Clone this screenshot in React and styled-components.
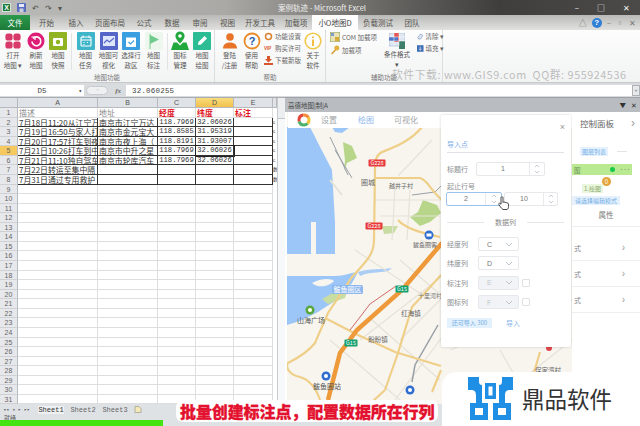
import React from 'react';
import styled, { createGlobalStyle } from 'styled-components';

const CJK = '"Noto Sans CJK SC", "Liberation Sans", sans-serif';
const MONO = '"Liberation Mono", "Noto Sans CJK SC", monospace';

const GlobalStyle = createGlobalStyle`
  html, body { margin: 0; padding: 0; background: #fff; }
  * { box-sizing: border-box; }
`;

const TABS = [
  ['开始', 31], ['插入', 28], ['页面布局', 40], ['公式', 28], ['数据', 28], ['审阅', 28],
  ['视图', 27], ['开发工具', 38], ['加载项', 34],
];

const ROWS = [
  ['描述', '地址', '经度', '纬度', '标注'],
  ['7月18日11:20从江宁万', '南京市江宁万达', '118.7969', '32.06026', ''],
  ['7月19日16:50与家人打', '南京市金元宝大', '118.8585', '31.95319', ''],
  ['7月20日17:57打车到夜', '南京市夜上海（', '118.8191', '31.93007', ''],
  ['7月21日10:26打车到中', '南京市中升之星', '118.7969', '32.06026', ''],
  ['7月21日11:10独自驾车', '南京市轮库汽车', '118.7969', '32.06026', ''],
  ['7月22日转运至集中隔', '', '', '', ''],
  ['7月31日通过专用救护', '', '', '', ''],
];

function GridIcon() {
  return (
    <svg width="20" height="20" viewBox="0 0 20 20">
      {[[6, 6], [14, 6], [6, 14], [14, 14]].map(([x, y]) => (
        <rect key={x + '-' + y} x={x - 3.6} y={y - 3.6} width="7.2" height="7.2" rx="2.6" fill="#d83a6a" />
      ))}
    </svg>
  );
}

function Tile({ bg, round, children }) {
  return (
    <svg width="18" height="18" viewBox="0 0 18 18">
      {round ? <circle cx="9" cy="9" r="8.5" fill={bg} /> : <rect width="18" height="18" rx="1" fill={bg} />}
      {children}
    </svg>
  );
}

const RIBBON_A = [
  { lines: ['打开', '地图 ▾'], w: 24, icon: <GridIcon /> },
  { lines: ['刷新', '地图'], w: 22, icon: <Tile bg="#dd1f78" round><path d="M6 6.5A4.4 4.4 0 1 1 5 9.5" fill="none" stroke="#fff" strokeWidth="1.6" /><path d="M4.5 5h3.5v3" fill="none" stroke="#fff" strokeWidth="1.2" /></Tile> },
  { lines: ['地图', '快照'], w: 22, icon: <Tile bg="#8fb321"><rect x="4" y="6" width="10" height="8" rx="1" fill="#fff" /><circle cx="9" cy="10" r="2.2" fill="#8fb321" /></Tile> },
];
const RIBBON_B = [
  { lines: ['地图', '任务'], w: 23, icon: <Tile bg="#3fb5c9"><rect x="4" y="5" width="10" height="9" rx="1" fill="none" stroke="#fff" strokeWidth="1.1" /><path d="M4 8h10M6 3.5v2.5M12 3.5v2.5M6.5 10.5h1M10 10.5h1M6.5 12.5h1" stroke="#fff" strokeWidth="1" /></Tile> },
  { lines: ['地图可', '视化'], w: 23, icon: <Tile bg="#5566c8"><rect x="3" y="4" width="12" height="10" fill="#dfe5fb" /><path d="M4 11l3-3 2.5 2 4.5-4" fill="none" stroke="#5566c8" strokeWidth="1.2" /></Tile> },
  { lines: ['选择行', '政区'], w: 22, icon: <Tile bg="#3a9fe0"><path d="M4 5.5h10V15H4z" fill="#fff" /><path d="M6.5 4a2.5 2.5 0 0 1 5 0M6.5 10l2 2 3.5-3.5" fill="none" stroke="#3a9fe0" strokeWidth="1.2" /></Tile> },
  { lines: ['地图', '标注'], w: 23, icon: <Tile bg="#eef7ee"><path d="M5 2v15" stroke="#8ed3a0" strokeWidth="1.2" /><path d="M5 3l9 4.5-9 4.5z" fill="#6fcb8b" /></Tile> },
];
const RIBBON_C = [
  { lines: ['图标', '管理'], w: 22, icon: <svg width="20" height="20" viewBox="0 0 20 20"><path d="M10 .5a4.6 4.6 0 0 1 4.6 4.6c0 3-4.6 7.6-4.6 7.6S5.4 8.1 5.4 5.1A4.6 4.6 0 0 1 10 .5z" fill="#20a83c" /><circle cx="10" cy="5" r="1.8" fill="#fff" /><path d="M1 19l2.5-7.500h3.500l3 3 3-3h3.500L19 19z" fill="#20a83c" /></svg> },
  { lines: ['地图', '绘图'], w: 22, icon: <Tile bg="#2dbd94"><path d="M5 13l.5-3 6-6 2.5 2.5-6 6z" fill="#fff" /></Tile> },
];
const RIBBON_D = [
  { lines: ['登陆', '/注册'], w: 23, icon: <svg width="18" height="18" viewBox="0 0 18 18"><circle cx="9" cy="5" r="3.8" fill="#e8742a" /><path d="M2 16.5c0-4 3-6 7-6s7 2 7 6z" fill="#e8742a" /></svg> },
  { lines: ['使用', '帮助'], w: 21, icon: <svg width="18" height="18" viewBox="0 0 18 18"><circle cx="9" cy="9" r="7.5" fill="#fff" stroke="#e8892a" strokeWidth="1.8" /><text x="9" y="13" textAnchor="middle" fontFamily="Liberation Sans" fontWeight="700" fontSize="11" fill="#2457a6">?</text></svg> },
];

function Big({ item }) {
  return (
    <BigButton $w={item.w}>
      <IconSlot>{item.icon}</IconSlot>
      <BigLabel>{item.lines[0]}<br />{item.lines[1]}</BigLabel>
    </BigButton>
  );
}

function Cog() {
  return <svg width="9" height="9" viewBox="0 0 9 9"><circle cx="4.5" cy="4.5" r="3" fill="none" stroke="#d9822b" strokeWidth="1.5" /></svg>;
}
function Vip() {
  return <VipTag>VIP</VipTag>;
}
function Download() {
  return <svg width="9" height="9" viewBox="0 0 9 9"><path d="M3 0h3v3h2L4.5 6.500 1 3h2zM0 7h9v2H0z" fill="#d9552b" /></svg>;
}
function Key() {
  return <svg width="10" height="10" viewBox="0 0 10 10"><circle cx="6.8" cy="3" r="2.5" fill="#e3b23c" /><path d="M5 4.5L1 8.500l1 1 4-4" fill="#d69a2a" /></svg>;
}
function Com() {
  return <svg width="10" height="10" viewBox="0 0 10 10"><rect width="10" height="10" fill="#e8e4b8" stroke="#8f9a5c" /><rect x="1" y="1" width="3" height="3" fill="#7a9ad0" /><rect x="5" y="5" width="4" height="4" fill="#d6ad3c" /></svg>;
}

function CondIcon() {
  return (
    <svg width="16" height="17" viewBox="0 0 16 17">
      <rect width="16" height="13" fill="#dfe7f3" stroke="#8ba3c4" strokeWidth=".5" />
      <rect x="5" y="0" width="5" height="9" fill="#e25656" />
      <rect x="0" y="4" width="9" height="4" fill="#5178c7" />
      <rect x="10" y="8" width="6" height="8" fill="#3d7f6a" />
      <path d="M0 4h16M0 8h16M5 0v13M10 0v13" stroke="#fff" strokeWidth=".5" />
    </svg>
  );
}

function MapArt() {
  return (
    <MapSvg viewBox="287 112 285 310" width="285" height="310">
      <rect x="287" y="112" width="285" height="310" fill="#f7f5ee" />
      <path d="M287 127H310L318 143L332 170L335 222V254H287Z" fill="#9cc6f8" />
      <path d="M332 127H350L342 133L335 132Z" fill="#9cc6f8" />
      <rect x="311" y="222" width="5" height="32" fill="#f7f5ee" />
      <path d="M287 276H335C345 276 352 272 358 272L352 283L338 299L318 312L300 321L287 325Z" fill="#9cc6f8" />
      <path d="M358 272C370 268 382 270 392 268L388 271C378 273 368 272 360 276Z" fill="#a9cdf5" />
      <path d="M312 283C320 278 332 278 334 281C330 286 318 289 312 283Z" fill="#f7f5ee" />
      <path d="M343 142L352 146L357 158L347 163L344 171L345 160Z" fill="#b8d68a" />
      <path d="M423 200L437 205L441 213L430 222L420 226L410 217L418 212Z" fill="#b8d68a" />
      <path d="M322 299L338 290L350 283L345 298L328 304Z" fill="#c7dda2" />
      <path d="M382 226H398L394 233L384 234Z" fill="#c7dda2" />
      <g fill="none" stroke="#e6e2d8" strokeWidth="1.2">
        <path d="M375 200H442M380 216H440M395 188L392 240M410 190L407 240M432 140L398 176M476 250L360 340M470 300L380 420M460 280L400 340M372 320L440 380M330 340L400 400M355 250L430 300M400 260L470 320M420 240L480 260M450 350L572 300M470 420L572 340M500 350L540 420" />
        <path d="M342 195L330 180" strokeWidth="2" />
      </g>
      <g fill="none" stroke="#9aa0a8" strokeWidth="1">
        <path d="M330 137L348 175M335 150L352 178" />
        <path d="M412 195L435 192L445 182" />
        <path d="M438 325L415 365L412 382" strokeWidth="1.5" />
      </g>
      <g fill="none" stroke="#efcf88" strokeWidth="2.2">
        <path d="M422 127C410 142 392 148 382 152C376 155 375 160 375 170L374 240C374 252 370 258 352 277L328 313L315 343C308 352 298 358 288 363C285 368 290 375 300 377C310 380 316 388 320 400" />
        <path d="M376 178H420C428 180 430 190 442 200" />
        <path d="M398 220C405 228 418 232 440 237" />
        <path d="M325 318L358 335L395 352L441 366" />
        <path d="M441 275L412 307L398 353L385 390L372 402" />
        <path d="M441 370L432 392" />
        <path d="M540 352L520 420" />
      </g>
      <path d="M442 243L402 290L357 330L340 353L328 400" fill="none" stroke="#ee9a3a" strokeWidth="4.5" />
      <path d="M396 286L370 304L350 330" fill="none" stroke="#d26a6a" strokeWidth="1" />
      <rect x="288" y="112" width="284" height="16" fill="#fff" />
      <RoadTag x={377} y={163} w={17} fill="#e83a3a" label="G228" />
      <RoadTag x={374} y={226} w={17} fill="#e83a3a" label="G228" />
      <RoadTag x={402} y={289} w={13} fill="#15a070" label="G15" />
      <RoadTag x={351} y={343} w={13} fill="#15a070" label="G15" />
      <rect x="332" y="285" width="31" height="9" rx="1.5" fill="#8db7ee" />
      <MapText x={347.500} y={292} fill="#fff" size={7}>鲅鱼圈区</MapText>
      <MapText x={368} y={185} fill="#666" size={7}>圈城</MapText>
      <MapText x={401} y={188} fill="#666" size={6}>越井子村</MapText>
      <MapText x={425} y={247} fill="#666" size={6}>鲅鱼圈客</MapText>
      <MapText x={411} y={316} fill="#666" size={6.5}>红海镇</MapText>
      <MapText x={378} y={342} fill="#666" size={6.5}>盼盼镇</MapText>
      <MapText x={430} y={298} fill="#777" size={6}>十里河村</MapText>
      <MapText x={311} y={323} fill="#555" size={7}>山海广场</MapText>
      <MapText x={327} y={389} fill="#555" size={7}>鲅鱼圈站</MapText>
      <MapText x={548} y={373} fill="#666" size={6.5}>保家湾村</MapText>
      <circle cx="310" cy="310" r="4.5" fill="#5aa83c" />
      <circle cx="310" cy="310" r="2" fill="#fff" />
      <circle cx="429" cy="235" r="4.5" fill="#2f6ed0" />
      <rect x="426.5" y="233.5" width="5" height="3" fill="#fff" />
      <circle cx="326" cy="376" r="4.5" fill="#2f6ed0" />
      <circle cx="326" cy="376" r="2" fill="#fff" />
      <circle cx="410" cy="390" r="4.5" fill="#2f6ed0" />
      <circle cx="410" cy="390" r="2" fill="#fff" />
      <circle cx="549" cy="348" r="3" fill="#e0464b" />
    </MapSvg>
  );
}

function RoadTag({ x, y, w, fill, label }) {
  return (
    <g>
      <rect x={x - w / 2} y={y - 3.5} width={w} height="7" rx="1" fill={fill} />
      <MapText x={x} y={y + 2.2} fill="#fff" size={5.5}>{label}</MapText>
    </g>
  );
}

function MapText({ x, y, fill, size, children }) {
  return <text x={x} y={y} fill={fill} fontSize={size} textAnchor="middle" fontFamily="Noto Sans CJK SC, sans-serif">{children}</text>;
}

function BrandRing() {
  return (
    <svg width="14" height="14" viewBox="0 0 14 14">
      <circle cx="7" cy="7" r="5" fill="none" stroke="#f2c230" strokeWidth="3" strokeDasharray="8 24" strokeDashoffset="4" />
      <circle cx="7" cy="7" r="5" fill="none" stroke="#49b36b" strokeWidth="3" strokeDasharray="10 22" strokeDashoffset="-4" />
      <circle cx="7" cy="7" r="5" fill="none" stroke="#e4453a" strokeWidth="3" strokeDasharray="8 24" strokeDashoffset="-14" />
      <circle cx="7" cy="7" r="5" fill="none" stroke="#f28c38" strokeWidth="3" strokeDasharray="6 26" strokeDashoffset="-22" />
    </svg>
  );
}

function Spin({ value, $w, active, spinW = 15 }) {
  return (
    <NumberBox $w={$w} $active={active}>
      <NumberValue>{value}</NumberValue>
      <SpinCol $w={spinW}>
        <svg width="6" height="4" viewBox="0 0 6 4"><path d="M1 3l2-2 2 2" fill="none" stroke="#bcc0c5" strokeWidth=".8" /></svg>
        <svg width="6" height="4" viewBox="0 0 6 4"><path d="M1 1l2 2 2-2" fill="none" stroke="#bcc0c5" strokeWidth=".8" /></svg>
      </SpinCol>
    </NumberBox>
  );
}

function SelectRow({ label, value, disabled, check }) {
  return (
    <FieldRow>
      <FieldLabel $w={31}>{label}</FieldLabel>
      <SelectBox $disabled={disabled}>
        <span>{value}</span>
        <svg width="8" height="5" viewBox="0 0 8 5"><path d="M1 1l3 3 3-3" fill="none" stroke="#bfc5cc" strokeWidth="1" /></svg>
      </SelectBox>
      {check && <CheckBox />}
    </FieldRow>
  );
}

function Dialog() {
  return (
    <DialogCard>
      <DialogClose>×</DialogClose>
      <DialogTitle>导入点</DialogTitle>
      <FieldRow $gap={2}>
        <FieldLabel $w={27}>标题行</FieldLabel>
        <Spin value="1" $w={69} />
      </FieldRow>
      <RangeLabel>起止行号</RangeLabel>
      <RangeRow>
        <Spin value="2" $w={56} active spinW={16} />
        <Spin value="10" $w={54} spinW={14} />
        <HandCursor>
          <svg width="11" height="14" viewBox="0 0 11 14">
            <path d="M3 1.5C3 .5 5 .5 5 1.500V6.500C5.500 5.500 7 5.700 7 6.800C7.500 6 9 6.300 9 7.300C9.500 6.800 10.500 7.200 10.500 8.200V10.500C10.500 12 10 13 9 13.500H5C4 13 3.500 12 2.500 11L.8 8.500C.2 7.500 1.500 6.800 2.200 7.500L3 8.300Z" fill="#fff" stroke="#333" strokeWidth=".9" />
          </svg>
        </HandCursor>
      </RangeRow>
      <DividerTitle><span>数据列</span></DividerTitle>
      <SelectStack>
        <SelectRow label="经度列" value="C" />
        <SelectRow label="纬度列" value="D" />
        <SelectRow label="标注列" value="E" disabled check />
        <SelectRow label="图标列" value="F" disabled check />
      </SelectStack>
      <ActionRow>
        <QuotaTag>还可导入 300</QuotaTag>
        <ImportLink>导入</ImportLink>
      </ActionRow>
    </DialogCard>
  );
}

function ControlPanel() {
  return (
    <SidePanel>
      <SideHead><span>控制面板</span><Chevron $big>›</Chevron></SideHead>
      <LayerLine><LayerTag>图层列表</LayerTag><Dash /></LayerLine>
      <GreenBar><span>图</span><GreenDot /><Dots>•••</Dots></GreenBar>
      <DrawLine>
        <DrawTag>1.绘图<Badge>0</Badge></DrawTag>
      </DrawLine>
      <ModeTag>请选择编辑模式</ModeTag>
      <AttrTitle>属性</AttrTitle>
      <AttrList>
        {[0, 1, 2].map((i) => (
          <AttrRow key={i}><span>式</span><Chevron>›</Chevron></AttrRow>
        ))}
      </AttrList>
    </SidePanel>
  );
}

export default function App() {
  return (
    <>
      <GlobalStyle />
      <Page>
        <TitleBar>
          <Qat>
            <ExcelBadge>X</ExcelBadge>
            <svg width="9" height="9" viewBox="0 0 9 9"><rect width="9" height="9" rx="1" fill="#5a6ec0" /><rect x="2" y="1" width="5" height="3" fill="#e6eaf6" /><rect x="2.5" y="5.5" width="4" height="3.5" fill="#c8cede" /></svg>
            <QatGlyph>↶</QatGlyph>
            <QatGlyph>↷</QatGlyph>
            <QatGlyph>▾</QatGlyph>
          </Qat>
          <WindowTitle>案例轨迹 - Microsoft Excel</WindowTitle>
          <WinButtons>
            <span>–</span><span>□</span><span>✕</span>
          </WinButtons>
        </TitleBar>

        <TabBar>
          <FileTab>文件</FileTab>
          <TabGroup>
            {TABS.map(([t, w]) => <Tab key={t} $w={w}>{t}</Tab>)}
            <ActiveTab>小O地图D</ActiveTab>
            <Tab $w={40}>负载测试</Tab>
            <Tab $w={28}>团队</Tab>
          </TabGroup>
          <TabRight>
            <span>△</span>
            <HelpDot>?</HelpDot>
            <span>–</span><span>▫</span><span>✕</span>
          </TabRight>
        </TabBar>

        <Ribbon>
          <RibbonGroup $w={215}>
            <GroupBody>
              {RIBBON_A.map((it) => <Big key={it.lines[0]} item={it} />)}
              <VSep />
              {RIBBON_B.map((it) => <Big key={it.lines[0]} item={it} />)}
              <VSep $tight />
              {RIBBON_C.map((it) => <Big key={it.lines[0]} item={it} />)}
            </GroupBody>
            <GroupName>地图功能</GroupName>
          </RibbonGroup>
          <RibbonGroup $w={111}>
            <GroupBody $pad={3}>
              {RIBBON_D.map((it) => <Big key={it.lines[0]} item={it} />)}
              <SmallStack>
                <SmallItem><Cog />功能设置</SmallItem>
                <SmallItem><Vip />购买许可</SmallItem>
                <SmallItem><Download />下载新版</SmallItem>
              </SmallStack>
              <Big item={{ lines: ['关于', '软件'], w: 22, icon: <svg width="18" height="18" viewBox="0 0 18 18"><circle cx="9" cy="9" r="7.8" fill="#fff" stroke="#f2c84b" strokeWidth="1.6" /><path d="M9 4.500v1.500M9 7.500V14" stroke="#f0b72f" strokeWidth="1.8" /></svg> }} />
            </GroupBody>
            <GroupName>帮助</GroupName>
          </RibbonGroup>
          <RibbonGroup $w={117}>
            <GroupBody>
              <AddinStack>
                <SmallItem><Com />COM 加载项</SmallItem>
                <SmallItem><Key />加载项</SmallItem>
              </AddinStack>
              <CondButton>
                <CondIcon />
                <BigLabel>条件格式<br />▾</BigLabel>
              </CondButton>
              <ClearStack>
                <SmallItem><svg width="9" height="9" viewBox="0 0 9 9"><path d="M1 6l4-5 3 2-3 5H2z" fill="#dfe7f3" stroke="#5b7db0" strokeWidth=".7" /></svg>清除 ▾</SmallItem>
                <SmallItem><svg width="9" height="9" viewBox="0 0 9 9"><rect width="9" height="9" fill="#3f6fb5" /><path d="M4.5 2v4M3 5l1.500 2L6 5" stroke="#fff" strokeWidth=".9" fill="none" /></svg>填充 ▾</SmallItem>
              </ClearStack>
            </GroupBody>
            <GroupName>辅助功能</GroupName>
          </RibbonGroup>
        </Ribbon>

        <FormulaBar>
          <NameBox>D5<NameCaret>▾</NameCaret></NameBox>
          <FxCluster><Pill>⌣</Pill><Fx>fx</Fx></FxCluster>
          <FormulaInput>32.060255</FormulaInput>
          <FormulaEnd>⌄</FormulaEnd>
        </FormulaBar>

        <Workspace>
          <SheetPane>
            <HeaderRow>
              <Corner />
              {['A', 'B', 'C', 'D', 'E'].map((c) => <ColHead key={c} $c={c} $on={c === 'D'}>{c}</ColHead>)}
              <ColHead $c="F" />
            </HeaderRow>
            <SheetBody>
              {Array.from({ length: 31 }, (_, i) => {
                const row = ROWS[i];
                return (
                  <GridRow key={i}>
                    <RowHead $on={i === 4}>{i + 1}</RowHead>
                    {['A', 'B', 'C', 'D', 'E'].map((c, k) => (
                      <Cell key={c} $c={c} $ruled={i >= 1 && i <= 7} $head={i === 0 && k >= 2} $muted={i === 0 && k < 2} $num={i > 0 && k >= 2} $sel={i === 4 && k === 3}>
                        {row ? row[k] : ''}
                      </Cell>
                    ))}
                    <EdgeCell>{i >= 1 && i <= 5 ? 'c' : i >= 6 && i <= 7 ? '数' : ''}</EdgeCell>
                  </GridRow>
                );
              })}
            </SheetBody>
            <Scroller><ScrollThumb /></Scroller>
          </SheetPane>

          <PanelPane>
            <PanelTitle>
              <span>高德地图|制|A</span>
              <PanelTools><span>▼</span><span>✕</span></PanelTools>
            </PanelTitle>
            <PanelBody>
              <MapPane>
                <MapArt />
                <MapNav>
                  <BrandRing />
                  <NavItem $x={14}>设置</NavItem>
                  <NavItem $x={51} $on>绘图</NavItem>
                  <NavItem $x={87}>可视化</NavItem>
                </MapNav>
                <Dialog />
              </MapPane>
              <ControlPanel />
            </PanelBody>
          </PanelPane>
        </Workspace>

        <SheetFooter>
          <SheetTabs>
            <NavArrows>◂◂ ◂ ▸ ▸▸</NavArrows>
            <SheetTab $on>Sheet1</SheetTab>
            <SheetTab>Sheet2</SheetTab>
            <SheetTab>Sheet3</SheetTab>
            <svg width="8" height="7" viewBox="0 0 8 7"><path d="M1 .5h4l2 2v4H1z" fill="#f6e9b8" stroke="#9a9a8a" strokeWidth=".7" /></svg>
          </SheetTabs>
          <StatusBar>就绪</StatusBar>
          <ProgressBar />
        </SheetFooter>

        <Watermark>软件下载: www.GIS9.com  QQ群: 955924536</Watermark>
        <Caption>批量创建标注点，配置数据所在行列</Caption>
        <LogoBlock>
          <svg width="45" height="43" viewBox="0 0 45 43">
            <path d="M0 0h11v4c0 3 1 4 3 4v18H8v-7C8 15 7 13 3 13H0z" fill="#1f8fe6" />
            <path d="M45 0H34v4c0 3-1 4-3 4v18h6v-7c0-4 1-6 5-6h3z" fill="#1f8fe6" />
            <path d="M17 6h11v16H17zM20.500 9.500v9h4v-9z" fill="#1f8fe6" fillRule="evenodd" />
            <path d="M2 26h18v17H2zM7 31v7h8v-7z" fill="#1f8fe6" fillRule="evenodd" />
            <path d="M25 26h18v17H25zM30 31v7h8v-7z" fill="#1f8fe6" fillRule="evenodd" />
          </svg>
          <LogoText>鼎品软件</LogoText>
        </LogoBlock>
      </Page>
    </>
  );
}

const COLS = { A: 80, B: 60, C: 38, D: 38, E: 39, F: 4 };

const Page = styled.div`
  position: relative;
  width: 640px;
  height: 426px;
  overflow: hidden;
  display: flex;
  flex-direction: column;
  background: #fff;
  font-family: ${CJK};
`;

const TitleBar = styled.div`
  height: 15px;
  flex: none;
  display: flex;
  align-items: center;
  justify-content: space-between;
  padding: 0 4px 0 2px;
  background: linear-gradient(90deg, #b9b9b7 0%, #aaa9a6 35%, #63625f 62%, #3f3e3c 78%, #4b4a48 100%);
`;

const Qat = styled.div`
  display: flex;
  align-items: center;
  gap: 6px;
  width: 276px;
`;

const ExcelBadge = styled.div`
  width: 9px;
  height: 9px;
  background: #1f7a3e;
  border: 1px solid #cfe6d4;
  color: #fff;
  font: 700 7px "Liberation Sans", sans-serif;
  line-height: 7px;
  text-align: center;
`;

const QatGlyph = styled.span`
  color: #55544f;
  font-size: 8px;
  line-height: 1;
`;

const WindowTitle = styled.div`
  color: #f0f0ee;
  font-size: 7.5px;
  white-space: nowrap;
  flex: 1;
`;

const WinButtons = styled.div`
  display: flex;
  gap: 18px;
  padding-right: 6px;
  color: #f2f2f2;
  font-size: 8px;
  line-height: 1;
`;

const TabBar = styled.div`
  height: 15px;
  flex: none;
  display: flex;
  align-items: stretch;
  background: linear-gradient(#b9b9b7, #e1e1df);
`;

const FileTab = styled.div`
  width: 30px;
  background: linear-gradient(#2c9a4c, #1c7a38);
  color: #fff;
  font-size: 7.5px;
  display: flex;
  align-items: center;
  justify-content: center;
`;

const TabGroup = styled.div`
  display: flex;
  padding-left: 1px;
`;

const Tab = styled.div`
  width: ${(p) => p.$w}px;
  color: #55544f;
  font-size: 7.5px;
  display: flex;
  align-items: center;
  justify-content: center;
  white-space: nowrap;
`;

const ActiveTab = styled(Tab)`
  width: 46px;
  margin-left: -1px;
  background: #fdfdfd;
  color: #444;
`;

const TabRight = styled.div`
  margin-left: auto;
  display: flex;
  align-items: center;
  gap: 5px;
  padding-right: 4px;
  color: #777;
  font-size: 8px;
`;

const HelpDot = styled.span`
  width: 10px;
  height: 10px;
  border-radius: 50%;
  background: #2f7fd6;
  color: #fff;
  font: 700 8px/10px "Liberation Sans", sans-serif;
  text-align: center;
`;

const Ribbon = styled.div`
  height: 53px;
  flex: none;
  display: flex;
  background: linear-gradient(#fdfdfd, #f2f3f3);
  border-bottom: 1px solid #c6c8ca;
`;

const RibbonGroup = styled.div`
  position: relative;
  width: ${(p) => p.$w}px;
  border-right: 1px solid #dcdddf;
  display: flex;
  flex-direction: column;
`;

const GroupBody = styled.div`
  flex: 1;
  display: flex;
  align-items: flex-start;
  padding-left: ${(p) => p.$pad || 1}px;
`;

const GroupName = styled.div`
  height: 10px;
  color: #777;
  font-size: 6.5px;
  line-height: 11px;
  text-align: center;
`;

const BigButton = styled.div`
  width: ${(p) => p.$w}px;
  display: flex;
  flex-direction: column;
  align-items: center;
  flex: none;
`;

const IconSlot = styled.div`
  height: 21px;
  display: flex;
  align-items: center;
  justify-content: center;
`;

const BigLabel = styled.div`
  color: #555;
  font-size: 6.5px;
  line-height: 9.5px;
  text-align: center;
  white-space: nowrap;
`;

const VSep = styled.div`
  width: 1px;
  height: 37px;
  margin: 3px ${(p) => (p.$tight ? 1 : 2)}px 0 2px;
  background: #e2e3e5;
  flex: none;
`;

const SmallStack = styled.div`
  width: 38px;
  flex: none;
  display: flex;
  flex-direction: column;
  gap: 3px;
  padding-top: 2px;
  margin-left: 2px;
`;

const AddinStack = styled(SmallStack)`
  width: 52px;
  margin-left: 3px;
`;

const ClearStack = styled(SmallStack)`
  width: 30px;
  padding-left: 3px;
`;

const SmallItem = styled.div`
  display: flex;
  align-items: center;
  gap: 2px;
  color: #666;
  font-size: 6.5px;
  line-height: 9px;
  white-space: nowrap;
`;

const VipTag = styled.span`
  color: #d9552b;
  font: 700 4.5px "Liberation Sans", sans-serif;
  width: 9px;
`;

const CondButton = styled.div`
  width: 30px;
  flex: none;
  display: flex;
  flex-direction: column;
  align-items: center;
  padding-top: 3px;
`;

const FormulaBar = styled.div`
  height: 14px;
  flex: none;
  display: flex;
  align-items: stretch;
  background: #d9dcdf;
  padding: 2px 0 1px;
  font-family: ${MONO};
  font-size: 7.5px;
  color: #444;
`;

const NameBox = styled.div`
  position: relative;
  width: 84px;
  background: #fff;
  display: flex;
  align-items: center;
  justify-content: center;
`;

const NameCaret = styled.span`
  position: absolute;
  right: 2px;
  font-size: 6px;
  color: #333;
`;

const FxCluster = styled.div`
  width: 42px;
  display: flex;
  align-items: center;
  justify-content: space-between;
  padding: 0 5px 0 2px;
  color: #666;
`;

const Pill = styled.span`
  width: 22px;
  height: 9px;
  border-radius: 5px;
  background: #eef0f2;
  border: 1px solid #c7cace;
  font-size: 5px;
  line-height: 7px;
  text-align: center;
  color: #aaa;
`;

const Fx = styled.span`
  font: italic 700 7px "Liberation Serif", serif;
`;

const FormulaInput = styled.div`
  flex: 1;
  background: #fff;
  padding-left: 6px;
  display: flex;
  align-items: center;
  letter-spacing: 0.2px;
`;

const FormulaEnd = styled.div`
  width: 8px;
  background: #e8e9eb;
  border: 1px solid #aeb1b5;
  font-size: 6px;
  line-height: 7px;
  text-align: center;
`;

const Workspace = styled.div`
  flex: 1;
  min-height: 0;
  display: flex;
`;

const SheetPane = styled.div`
  position: relative;
  width: 285px;
  flex: none;
  overflow: hidden;
  background: #fff;
  border-top: 1px solid #a9acb0;
`;

const HeaderRow = styled.div`
  display: flex;
  height: 10px;
  background: #dfe2e6;
`;

const Corner = styled.div`
  width: 18px;
  flex: none;
  border-right: 1px solid #b6b9bd;
  border-bottom: 1px solid #b6b9bd;
`;

const ColHead = styled.div`
  width: ${(p) => COLS[p.$c]}px;
  flex: none;
  background: ${(p) => (p.$on ? 'linear-gradient(#f8dc7c, #f2c04c)' : 'transparent')};
  border-right: 1px solid #b6b9bd;
  border-bottom: 1px solid #b6b9bd;
  color: #555;
  font: 7px/9px "Liberation Sans", sans-serif;
  text-align: center;
`;

const SheetBody = styled.div`
  display: flex;
  flex-direction: column;
`;

const GridRow = styled.div`
  display: flex;
  height: 9.57px;
  flex: none;
`;

const RowHead = styled.div`
  width: 18px;
  flex: none;
  background: ${(p) => (p.$on ? '#f5c95e' : '#e6e8eb')};
  border-right: 1px solid #b6b9bd;
  border-bottom: 1px solid #cfd1d4;
  color: #666;
  font: 7px/9px "Liberation Sans", sans-serif;
  text-align: center;
`;

const Cell = styled.div`
  width: ${(p) => COLS[p.$c]}px;
  flex: none;
  overflow: hidden;
  white-space: nowrap;
  padding-left: ${(p) => (p.$num ? 0 : 1)}px;
  border-right: 1px solid ${(p) => (p.$ruled ? '#333' : '#dcdedf')};
  border-bottom: 1px solid ${(p) => (p.$ruled ? '#333' : '#dcdedf')};
  outline: ${(p) => (p.$sel ? '1px solid #222' : 'none')};
  font-family: ${(p) => (p.$num ? MONO : CJK)};
  font-size: ${(p) => (p.$num ? '7.2px' : '7.9px')};
  line-height: 9.5px;
  font-weight: ${(p) => (p.$head ? 700 : 400)};
  color: ${(p) => (p.$head ? '#e0101a' : p.$muted ? '#888' : '#333')};
  text-align: ${(p) => (p.$num ? 'center' : 'left')};
`;

const EdgeCell = styled.div`
  width: 4px;
  flex: none;
  overflow: hidden;
  color: #333;
  font-family: ${CJK};
  font-size: 4.5px;
  line-height: 9px;
`;

const Scroller = styled.div`
  position: absolute;
  top: 0;
  right: 0;
  bottom: 0;
  width: 8px;
  background: #eceef0;
  border-left: 1px solid #c8cbce;
`;

const ScrollThumb = styled.div`
  margin-top: 20px;
  height: 285px;
  background: #f7f8f9;
  border-top: 1px solid #c4c7ca;
  border-bottom: 1px solid #c4c7ca;
`;

const PanelPane = styled.div`
  flex: 1;
  min-width: 0;
  display: flex;
  flex-direction: column;
  background: #fff;
`;

const PanelTitle = styled.div`
  height: 15px;
  flex: none;
  display: flex;
  align-items: center;
  justify-content: space-between;
  padding: 0 3px 0 3px;
  background: #b9bdc1;
  border-top: 1px solid #9fa3a7;
  color: #444;
  font-size: 6.5px;
`;

const PanelTools = styled.div`
  display: flex;
  gap: 5px;
  color: #333;
  font-size: 6.5px;
`;

const PanelBody = styled.div`
  flex: 1;
  min-height: 0;
  display: flex;
  padding-left: 2px;
  background: #fff;
`;

const MapPane = styled.div`
  position: relative;
  width: 285px;
  flex: none;
  overflow: hidden;
`;

const MapSvg = styled.svg`
  display: block;
`;

const MapNav = styled.div`
  position: absolute;
  top: 0;
  left: 10px;
  height: 15px;
  display: flex;
  align-items: center;
`;

const NavItem = styled.span`
  position: absolute;
  left: ${(p) => p.$x + 10}px;
  white-space: nowrap;
  color: ${(p) => (p.$on ? '#8fb7ec' : '#a3a6aa')};
  font-size: 8px;
`;

const DialogCard = styled.div`
  position: absolute;
  top: 3px;
  left: 154px;
  width: 130px;
  height: 232px;
  padding: 24px 7px 0 6px;
  background: #fff;
  border-radius: 2px;
  box-shadow: 0 0 3px rgba(0, 0, 0, 0.18);
  font-size: 6.5px;
  color: #777;
`;

const DialogClose = styled.div`
  position: absolute;
  top: 7px;
  right: 6px;
  color: #999;
  font: 9px/10px "Liberation Sans", sans-serif;
`;

const DialogTitle = styled.div`
  height: 14px;
  color: #7fb0e8;
  font-size: 7px;
  line-height: 10px;
  margin-bottom: 9px;
  border-bottom: 1px solid #dfe3e8;
`;

const FieldRow = styled.div`
  display: flex;
  align-items: center;
  gap: ${(p) => p.$gap || 0}px;
  height: 14px;
`;

const FieldLabel = styled.div`
  width: ${(p) => p.$w}px;
  flex: none;
  color: #8a8d90;
  font-size: 7px;
  white-space: nowrap;
`;

const NumberBox = styled.div`
  width: ${(p) => p.$w}px;
  height: 14px;
  flex: none;
  display: flex;
  background: #fff;
  border: 1px solid ${(p) => (p.$active ? '#9cc3ee' : '#e6e8eb')};
  border-radius: 2px;
`;

const NumberValue = styled.div`
  flex: 1;
  text-align: center;
  color: #777;
  font: 7px/12px "Liberation Sans", sans-serif;
`;

const SpinCol = styled.div`
  width: ${(p) => p.$w}px;
  display: flex;
  flex-direction: column;
  align-items: center;
  justify-content: space-around;
  border-left: 1px solid #e8eaec;
`;

const RangeLabel = styled.div`
  margin-top: 5px;
  height: 11px;
  color: #8a8d90;
  font-size: 7px;
  line-height: 10px;
`;

const RangeRow = styled.div`
  position: relative;
  display: flex;
  gap: 2px;
  margin-left: -1px;
`;

const HandCursor = styled.div`
  position: absolute;
  left: 52px;
  top: 4px;
  line-height: 0;
`;

const DividerTitle = styled.div`
  margin-top: 11px;
  height: 10px;
  display: flex;
  align-items: center;
  gap: 11px;
  color: #888;
  font-size: 7px;

  &::before, &::after {
    content: '';
    flex: 1;
    height: 1px;
    background: #e4e6e9;
  }
`;

const SelectStack = styled.div`
  margin-top: 10px;
  display: flex;
  flex-direction: column;
  gap: 5.4px;
`;

const SelectBox = styled.div`
  width: 41px;
  height: 14px;
  flex: none;
  display: flex;
  align-items: center;
  justify-content: space-between;
  padding: 0 5px 0 8px;
  background: ${(p) => (p.$disabled ? '#f1f3f6' : '#fff')};
  border: 1px solid #e6e8eb;
  border-radius: 2px;
  color: ${(p) => (p.$disabled ? '#c5c8cc' : '#777')};
  font: 7px "Liberation Sans", sans-serif;
`;

const CheckBox = styled.div`
  width: 8px;
  height: 8px;
  margin-left: 3px;
  border: 1px solid #dfe1e4;
  border-radius: 1px;
`;

const ActionRow = styled.div`
  margin-top: 9px;
  display: flex;
  align-items: center;
  gap: 14px;
`;

const QuotaTag = styled.div`
  width: 45px;
  height: 10px;
  background: #e3f1fc;
  color: #74aee6;
  font-size: 6px;
  line-height: 10px;
  text-align: center;
  white-space: nowrap;
`;

const ImportLink = styled.div`
  color: #8ab6e8;
  font-size: 7px;
`;

const SidePanel = styled.div`
  flex: 1;
  min-width: 0;
  background: #fff;
  font-size: 7px;
  color: #777;
`;

const SideHead = styled.div`
  height: 20px;
  display: flex;
  align-items: center;
  justify-content: space-between;
  padding: 2px 5px 0 8px;
  color: #666;
  font-size: 8.5px;
`;

const Chevron = styled.span`
  color: #999;
  font: ${(p) => (p.$big ? '12px' : '10px')}/10px "Liberation Sans", sans-serif;
`;

const LayerLine = styled.div`
  height: 16px;
  margin-top: 11px;
  display: flex;
  align-items: center;
  padding-left: 8px;
  gap: 9px;
`;

const LayerTag = styled.div`
  width: 28px;
  height: 9px;
  background: #e5f1fc;
  color: #74aee6;
  font-size: 6px;
  line-height: 9px;
  text-align: center;
  white-space: nowrap;
`;

const Dash = styled.div`
  width: 10px;
  height: 1px;
  background: #e2e4e6;
`;

const GreenBar = styled.div`
  width: 60px;
  height: 11px;
  margin-top: 5px;
  display: flex;
  align-items: center;
  padding: 0 2px;
  background: #b9ea92;
  color: #6a8f58;
  font-size: 6.5px;
`;

const GreenDot = styled.span`
  width: 5px;
  height: 5px;
  margin-left: auto;
  margin-right: 5px;
  border-radius: 50%;
  background: #17c94a;
`;

const Dots = styled.span`
  color: #555;
  font-size: 4px;
  letter-spacing: -0.5px;
`;

const DrawLine = styled.div`
  height: 12px;
  margin-top: 9px;
  padding-left: 10px;
`;

const DrawTag = styled.div`
  position: relative;
  width: 21px;
  height: 9px;
  background: #eaf7df;
  color: #8aa96e;
  font-size: 6px;
  line-height: 9px;
  text-align: center;
  white-space: nowrap;
`;

const Badge = styled.span`
  position: absolute;
  top: -7px;
  right: -8px;
  width: 9px;
  height: 9px;
  border-radius: 50%;
  background: #e3a43a;
  color: #fff;
  font-size: 6px;
  line-height: 9px;
`;

const ModeTag = styled.div`
  width: 48px;
  height: 9px;
  background: #e5f1fc;
  color: #74aee6;
  font-size: 6px;
  line-height: 9px;
  white-space: nowrap;
  overflow: hidden;
  text-align: center;
`;

const AttrTitle = styled.div`
  height: 19px;
  margin-top: 3px;
  border-bottom: 1px solid #eceef0;
  color: #777;
  font-size: 7.5px;
  line-height: 14px;
  text-align: center;
`;

const AttrList = styled.div`
  padding-top: 8px;
`;

const AttrRow = styled.div`
  height: 26px;
  display: flex;
  align-items: center;
  justify-content: space-between;
  padding: 0 15px 0 2px;
  border-bottom: 1px solid #eceef0;
  color: #888;
`;

const SheetFooter = styled.div`
  position: relative;
  height: 22px;
  flex: none;
  background: #dfe2e5;
`;

const SheetTabs = styled.div`
  height: 11px;
  display: flex;
  align-items: center;
  padding-left: 3px;
  gap: 6px;
  font-family: ${MONO};
`;

const NavArrows = styled.span`
  width: 29px;
  color: #555;
  font-size: 5px;
  white-space: nowrap;
`;

const SheetTab = styled.span`
  width: 26px;
  color: ${(p) => (p.$on ? '#333' : '#666')};
  background: ${(p) => (p.$on ? '#eef0f2' : 'transparent')};
  font-size: 7px;
  text-align: center;
`;

const StatusBar = styled.div`
  height: 6px;
  padding-left: 4px;
  color: #555;
  font-size: 6px;
  line-height: 6px;
`;

const ProgressBar = styled.div`
  position: absolute;
  left: 0;
  bottom: 0;
  width: 163px;
  height: 6px;
  background: #44e312;
`;

const Watermark = styled.div`
  position: absolute;
  top: 66px;
  left: 392px;
  color: rgba(150, 150, 150, 0.6);
  font-size: 10.8px;
  line-height: 16px;
  letter-spacing: 0.55px;
  white-space: pre;
`;

const Caption = styled.div`
  position: absolute;
  top: 400px;
  left: 176px;
  padding: 0 4px;
  background: #fff;
  border-radius: 7px;
  color: #e3102e;
  font-size: 16px;
  font-weight: 900;
  line-height: 22px;
  letter-spacing: -0.1px;
  white-space: nowrap;
  -webkit-text-stroke: 0.3px #e3102e;
`;

const LogoBlock = styled.div`
  position: absolute;
  top: 372px;
  left: 442px;
  width: 198px;
  height: 54px;
  display: flex;
  align-items: center;
  gap: 9px;
  padding: 0 0 2px 26px;
  background: #fff;
  border-top-left-radius: 14px;
`;

const LogoText = styled.div`
  color: #333;
  font-size: 22.5px;
  line-height: 1;
  white-space: nowrap;
`;
